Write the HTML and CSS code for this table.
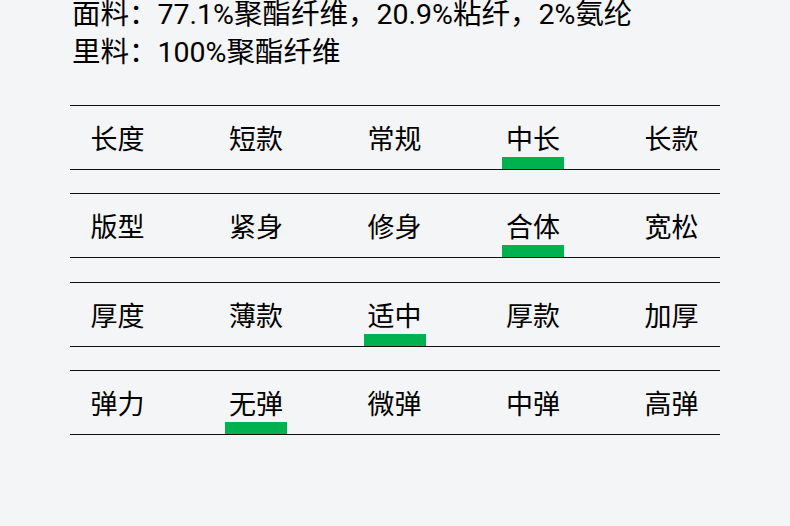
FILE: index.html
```html
<!DOCTYPE html>
<html lang="zh">
<head>
<meta charset="utf-8">
<link rel="stylesheet" href="styles.css">
</head>
<body>
<div class="material">
  <p class="line">面料：77.1%聚酯纤维，20.9%粘纤，2%氨纶</p>
  <p class="line">里料：100%聚酯纤维</p>
</div>
<div class="specs">
  <div class="row">
    <span class="cell">长度</span>
    <span class="cell">短款</span>
    <span class="cell">常规</span>
    <span class="cell on">中长</span>
    <span class="cell">长款</span>
  </div>
  <div class="row">
    <span class="cell">版型</span>
    <span class="cell">紧身</span>
    <span class="cell">修身</span>
    <span class="cell on">合体</span>
    <span class="cell">宽松</span>
  </div>
  <div class="row">
    <span class="cell">厚度</span>
    <span class="cell">薄款</span>
    <span class="cell on">适中</span>
    <span class="cell">厚款</span>
    <span class="cell">加厚</span>
  </div>
  <div class="row">
    <span class="cell">弹力</span>
    <span class="cell on">无弹</span>
    <span class="cell">微弹</span>
    <span class="cell">中弹</span>
    <span class="cell">高弹</span>
  </div>
</div>
</body>
</html>
```

FILE: styles.css
```css
html, body {
  margin: 0;
  padding: 0;
  background: #f4f5f7;
}
body {
  font-family: Roboto, "Noto Sans CJK SC", sans-serif;
  color: #000;
  width: 790px;
  height: 526px;
  overflow: hidden;
}
.material {
  padding-left: 72px;
  margin-top: -4px;
}
.line {
  margin: 0;
  font-size: 28.5px;
  line-height: 38px;
  white-space: nowrap;
}
.specs {
  margin: 33px 70px 0 70px;
  width: 650px;
}
.row {
  display: flex;
  justify-content: space-between;
  padding: 0 17.5px 0 16.5px;
  border-top: 1px solid #111;
  border-bottom: 1px solid #111;
  height: 63px;
  margin-bottom: 23.3px;
}
.cell {
  width: 62px;
  height: 63px;
  display: flex;
  align-items: center;
  justify-content: center;
  font-size: 27px;
  white-space: nowrap;
}
.cell.on {
  box-shadow: inset 0 -12px 0 #00b14f;
}
```
